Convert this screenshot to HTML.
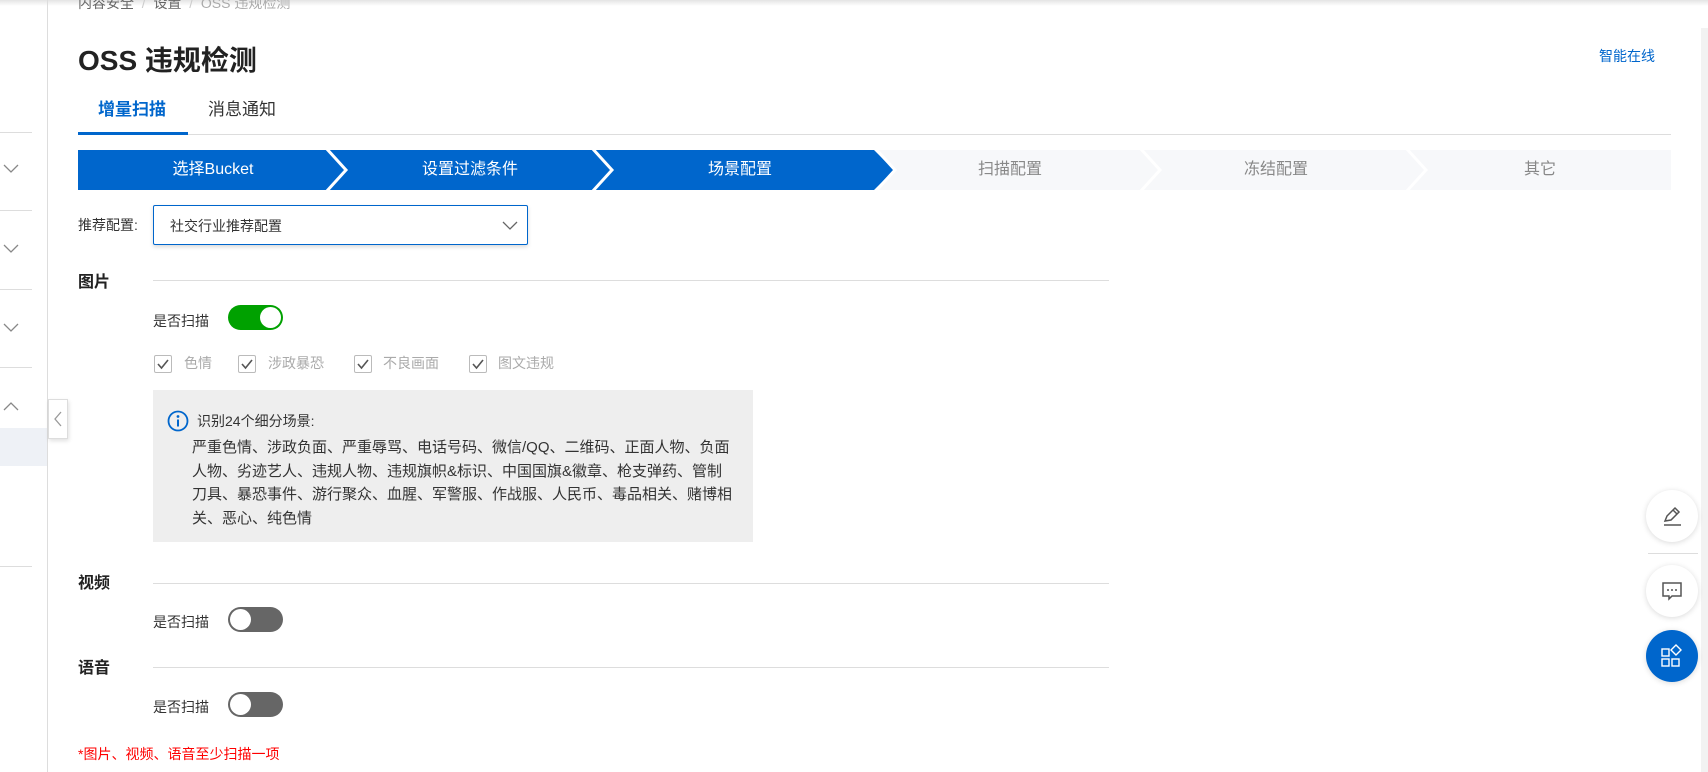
<!DOCTYPE html>
<html><head><meta charset="utf-8"><style>
*{margin:0;padding:0;box-sizing:border-box}
body{width:1708px;height:772px;overflow:hidden;background:#fff;font-family:"Liberation Sans","Noto Sans CJK SC",sans-serif;color:#333;position:relative}
.a{position:absolute;white-space:nowrap}
.hl{position:absolute;height:1px;background:#ddd}
.step{position:absolute;top:150px;height:40px;width:270px;line-height:40px;text-align:center;font-size:16px}
.tg{position:absolute;width:55px;height:25px;border-radius:13px}
.tg i{position:absolute;top:2px;width:21px;height:21px;border-radius:50%;background:#fff}
.cb{position:absolute;top:355px;width:18px;height:18px;border:1px solid #bbb;border-radius:2px;background:#fff}
.cb svg{position:absolute;left:2px;top:2px}
.cl{position:absolute;top:353px;font-size:14px;color:#aaa}
.fb{position:absolute;left:1646px;width:52px;height:52px;border-radius:50%;background:#fff;box-shadow:0 1px 6px rgba(0,0,0,.15)}
</style></head><body>
<div class="a" style="left:0;top:0;width:1708px;height:6px;background:linear-gradient(#e4e4e4,#fff)"></div>
<div class="a" style="left:47px;top:0;width:1px;height:772px;background:#ddd"></div>
<div class="hl" style="left:0;top:132px;width:32px"></div>
<div class="hl" style="left:0;top:210px;width:32px"></div>
<div class="hl" style="left:0;top:289px;width:32px"></div>
<div class="hl" style="left:0;top:367px;width:32px"></div>
<div class="hl" style="left:0;top:566px;width:32px"></div>
<div class="a" style="left:0;top:428px;width:47px;height:38px;background:#eef1f6"></div>
<svg class="a" style="left:3px;top:164px" width="16" height="10"><path d="M1 1l7 7 7-7" fill="none" stroke="#888" stroke-width="1.3"/></svg>
<svg class="a" style="left:3px;top:244px" width="16" height="10"><path d="M1 1l7 7 7-7" fill="none" stroke="#888" stroke-width="1.3"/></svg>
<svg class="a" style="left:3px;top:323px" width="16" height="10"><path d="M1 1l7 7 7-7" fill="none" stroke="#888" stroke-width="1.3"/></svg>
<svg class="a" style="left:3px;top:401px" width="16" height="10"><path d="M1 9l7-7 7 7" fill="none" stroke="#888" stroke-width="1.3"/></svg>
<div class="a" style="left:48px;top:399px;width:20px;height:40px;background:#fff;border:1px solid #ddd;box-shadow:1px 2px 4px rgba(0,0,0,.12)"><svg style="position:absolute;left:5px;top:11px" width="8" height="16"><path d="M7 1L1 8l6 7" fill="none" stroke="#999" stroke-width="1.3"/></svg></div>
<div class="a" style="left:78px;top:-7px;font-size:14px;color:#666">内容安全 <span style="color:#ccc">&nbsp;/&nbsp;</span> 设置 <span style="color:#ccc">&nbsp;/&nbsp;</span> <span style="color:#aaa">OSS 违规检测</span></div>
<div class="a" style="left:78px;top:39px;font-size:28px;font-weight:bold;color:#222">OSS 违规检测</div>
<div class="a" style="left:1599px;top:46px;font-size:14px;color:#0066cc">智能在线</div>
<div class="a" style="left:98px;top:95px;font-size:17px;font-weight:bold;color:#0066cc">增量扫描</div>
<div class="a" style="left:208px;top:95px;font-size:17px;color:#333">消息通知</div>
<div class="hl" style="left:78px;top:134px;width:1593px"></div>
<div class="a" style="left:78px;top:132px;width:110px;height:3px;background:#0066cc"></div>
<div class="a" style="left:78px;top:150px;width:1593px;height:40px;background:#f7f8fa"></div>
<svg class="a" style="left:78px;top:150px" width="1593" height="40">
<polygon points="0,0 796,0 816,20 796,40 0,40" fill="#0066cc"/>
<g fill="none" stroke="#fff" stroke-width="3">
<path d="M248 -2l20 22-20 22"/><path d="M514 -2l20 22-20 22"/><path d="M797 -2l20 22-20 22"/><path d="M1062 -2l20 22-20 22"/><path d="M1328 -2l20 22-20 22"/></g></svg>
<div class="step" style="left:78px;color:#fff">选择Bucket</div>
<div class="step" style="left:335px;color:#fff">设置过滤条件</div>
<div class="step" style="left:605px;color:#fff">场景配置</div>
<div class="step" style="left:875px;color:#888">扫描配置</div>
<div class="step" style="left:1141px;color:#888">冻结配置</div>
<div class="step" style="left:1405px;color:#888">其它</div>
<div class="a" style="left:78px;top:215px;font-size:14px">推荐配置:</div>
<div class="a" style="left:153px;top:205px;width:375px;height:40px;border:1px solid #0066cc;border-radius:2px;box-shadow:0 2px 4px rgba(0,0,0,.15)"></div>
<div class="a" style="left:170px;top:216px;font-size:14px">社交行业推荐配置</div>
<svg class="a" style="left:502px;top:221px" width="16" height="10"><path d="M1 1l7 7 7-7" fill="none" stroke="#666" stroke-width="1.3"/></svg>
<div class="a" style="left:78px;top:268px;font-size:16px;font-weight:bold;color:#222">图片</div>
<div class="hl" style="left:153px;top:280px;width:956px"></div>
<div class="a" style="left:153px;top:311px;font-size:14px">是否扫描</div>
<div class="tg" style="left:228px;top:305px;background:#00a100"><i style="left:32px"></i></div>
<div class="cb" style="left:154px"><svg width="12" height="12"><path d="M1 6l3.5 4L11 2" fill="none" stroke="#555" stroke-width="1.6"/></svg></div><div class="cl" style="left:184px">色情</div>
<div class="cb" style="left:238px"><svg width="12" height="12"><path d="M1 6l3.5 4L11 2" fill="none" stroke="#555" stroke-width="1.6"/></svg></div><div class="cl" style="left:268px">涉政暴恐</div>
<div class="cb" style="left:354px"><svg width="12" height="12"><path d="M1 6l3.5 4L11 2" fill="none" stroke="#555" stroke-width="1.6"/></svg></div><div class="cl" style="left:383px">不良画面</div>
<div class="cb" style="left:469px"><svg width="12" height="12"><path d="M1 6l3.5 4L11 2" fill="none" stroke="#555" stroke-width="1.6"/></svg></div><div class="cl" style="left:498px">图文违规</div>
<div class="a" style="left:153px;top:390px;width:600px;height:152px;background:#eeeeee"></div>
<svg class="a" style="left:167px;top:410px" width="22" height="22"><circle cx="11" cy="11" r="9.5" fill="none" stroke="#0066cc" stroke-width="1.8"/><circle cx="11" cy="6.5" r="1.4" fill="#0066cc"/><path d="M11 9.5v7" stroke="#0066cc" stroke-width="2"/></svg>
<div class="a" style="left:197px;top:411px;font-size:14px">识别24个细分场景:</div>
<div class="a" style="left:192px;top:436px;font-size:15px;line-height:23.7px">严重色情、涉政负面、严重辱骂、电话号码、微信/QQ、二维码、正面人物、负面<br>人物、劣迹艺人、违规人物、违规旗帜&amp;标识、中国国旗&amp;徽章、枪支弹药、管制<br>刀具、暴恐事件、游行聚众、血腥、军警服、作战服、人民币、毒品相关、赌博相<br>关、恶心、纯色情</div>
<div class="a" style="left:78px;top:569px;font-size:16px;font-weight:bold;color:#222">视频</div>
<div class="hl" style="left:153px;top:583px;width:956px"></div>
<div class="a" style="left:153px;top:612px;font-size:14px">是否扫描</div>
<div class="tg" style="left:228px;top:607px;background:#666"><i style="left:2px"></i></div>
<div class="a" style="left:78px;top:654px;font-size:16px;font-weight:bold;color:#222">语音</div>
<div class="hl" style="left:153px;top:667px;width:956px"></div>
<div class="a" style="left:153px;top:697px;font-size:14px">是否扫描</div>
<div class="tg" style="left:228px;top:692px;background:#666"><i style="left:2px"></i></div>
<div class="a" style="left:78px;top:744px;font-size:14px;color:#f00">*图片、视频、语音至少扫描一项</div>
<div class="a" style="left:1701px;top:28px;width:7px;height:744px;background:#f2f2f2"></div>
<div class="fb" style="top:490px"><svg style="position:absolute;left:14px;top:14px" width="24" height="24"><path d="M5 17l2-5L15 4l4 4-8 8-6 1z" fill="none" stroke="#555" stroke-width="1.5"/><path d="M13 6l4 4" stroke="#555" stroke-width="1.5"/><path d="M4 21h17" stroke="#555" stroke-width="1.5"/></svg></div>
<div class="a" style="left:1648px;top:553px;width:50px;height:1px;background:#ddd"></div>
<div class="fb" style="top:565px"><svg style="position:absolute;left:14px;top:14px" width="24" height="24"><path d="M3 4h18v13h-9l-3 3v-3H3z" fill="none" stroke="#555" stroke-width="1.5"/><circle cx="8" cy="11" r="1" fill="#555"/><circle cx="12" cy="11" r="1" fill="#555"/><circle cx="16" cy="11" r="1" fill="#555"/></svg></div>
<div class="fb" style="top:630px;background:#0066cc"><svg style="position:absolute;left:14px;top:14px" width="24" height="24"><g fill="none" stroke="#fff" stroke-width="1.4"><rect x="2" y="5" width="7" height="7"/><rect x="2" y="15" width="7" height="7"/><rect x="12" y="15" width="7" height="7"/><path d="M16 1l5 5-5 5-5-5z"/></g></svg></div>
</body></html>
